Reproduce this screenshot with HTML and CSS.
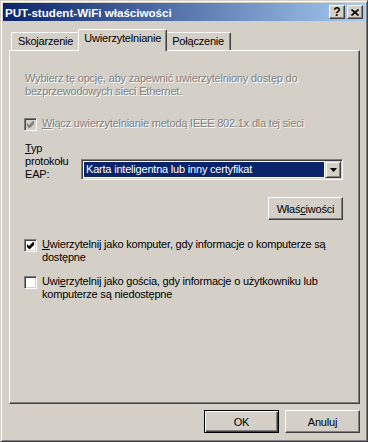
FILE: index.html
```html
<!DOCTYPE html>
<html lang="pl">
<head>
  <meta charset="UTF-8" />
  <title>PUT-student-WiFi właściwości</title>
  <link rel="stylesheet" href="styles.css">
</head>
<body>

  <div class="window">
    <div class="titlebar">
      <span class="title">PUT-student-WiFi właściwości</span>
      <div class="caption-buttons">
        <button class="cap-btn help">?</button>
        <button class="cap-btn">
          <svg width="8" height="7" viewBox="0 0 8 7"><path d="M0.5 0.5 L7.5 6.5 M7.5 0.5 L0.5 6.5" stroke="#000" stroke-width="1.6"/></svg>
        </button>
      </div>
    </div>

    <div class="dialog">
      <div class="tabs">
        <div class="tab first">Skojarzenie</div>
        <div class="tab active">Uwierzytelnianie</div>
        <div class="tab">Połączenie</div>
      </div>

      <div class="panel">
        <p class="hint disabled">Wybierz tę opcję, aby zapewnić uwierzytelniony dostęp do<br>bezprzewodowych sieci Ethernet.</p>

        <div class="check disabled">
          <span class="box off">
            <svg width="7" height="7" viewBox="0 0 7 7"><path d="M0 2 L2 4 L6 0 L7 0 L7 3 L3 7 L2 7 L0 5 Z" fill="#808080"/></svg>
          </span>
          <span class="check-text"><u>W</u>łącz uwierzytelnianie metodą IEEE 802.1x dla tej sieci</span>
        </div>

        <div class="eap-row">
          <div class="eap-label"><u>T</u>yp<br>protokołu<br>EAP:</div>
          <div class="combo">
            <div class="combo-value">Karta inteligentna lub inny certyfikat</div>
            <div class="combo-btn">
              <svg width="7" height="4" viewBox="0 0 7 4"><path d="M0 0 H7 L3.5 4 Z" fill="#000"/></svg>
            </div>
          </div>
        </div>

        <div class="props-row">
          <button class="btn">Właś<u>c</u>iwości</button>
        </div>

        <div class="check first-option">
          <span class="box">
            <svg width="7" height="7" viewBox="0 0 7 7"><path d="M0 2 L2 4 L6 0 L7 0 L7 3 L3 7 L2 7 L0 5 Z" fill="#000"/></svg>
          </span>
          <span class="check-text"><u>U</u>wierzytelnij jako komputer, gdy informacje o komputerze są<br>dostępne</span>
        </div>

        <div class="check second-option">
          <span class="box"></span>
          <span class="check-text">Uwi<u>e</u>rzytelnij jako gościa, gdy informacje o użytkowniku lub<br>komputerze są niedostępne</span>
        </div>
      </div>

      <div class="actions">
        <button class="btn default">OK</button>
        <button class="btn">Anuluj</button>
      </div>
    </div>
  </div>

</body>
</html>
```

FILE: styles.css
```css
* {
  box-sizing: border-box;
}

body {
  margin: 0;
  padding: 0;
  background: #d4d0c8;
  font-family: 'Liberation Sans', Arial, sans-serif;
  font-size: 11px;
  line-height: 13px;
  letter-spacing: -0.2px;
  color: #000;
}

u {
  text-decoration: underline;
  text-underline-offset: 1px;
}

.window {
  width: 368px;
  height: 442px;
  padding: 2px;
  background: #d4d0c8;
  border: 1px solid;
  border-color: #d4d0c8 #404040 #404040 #d4d0c8;
  box-shadow: inset 1px 1px #fff, inset -1px -1px #808080;
}

.titlebar {
  height: 18px;
  display: flex;
  align-items: center;
  justify-content: space-between;
  padding: 0 2px 0 2px;
  background: linear-gradient(to right, #0a246a, #a6caf0);
}

.title {
  color: #fff;
  font-weight: bold;
  font-size: 11.6px;
  letter-spacing: 0;
}

.caption-buttons {
  display: flex;
  gap: 2px;
}

.cap-btn {
  width: 16px;
  height: 14px;
  padding: 0;
  margin: 0;
  display: flex;
  align-items: center;
  justify-content: center;
  background: #d4d0c8;
  border: 1px solid;
  border-color: #fff #404040 #404040 #fff;
  box-shadow: inset -1px -1px #808080;
  font-family: 'Liberation Sans', Arial, sans-serif;
  font-weight: bold;
  font-size: 12px;
  line-height: 12px;
  color: #000;
}

.dialog {
  padding: 8px 5px 0 6px;
}

.tabs {
  height: 21px;
  display: flex;
  align-items: flex-end;
  padding-left: 2px;
}

.tab {
  height: 18px;
  padding: 2px 6px 0 6px;
  background: #d4d0c8;
  border-left: 1px solid #fff;
  border-top: 1px solid #fff;
  border-right: 1px solid #404040;
  border-radius: 2px 2px 0 0;
  box-shadow: inset -1px 0 #808080;
  white-space: nowrap;
}

.tab.active {
  position: relative;
  z-index: 1;
  height: 22px;
  margin: 0 -2px -1px -2px;
  padding: 2px 5px 0 5px;
}

.panel {
  height: 354px;
  padding: 21px 16px 0 15px;
  border: 1px solid;
  border-color: #fff #404040 #404040 #fff;
  box-shadow: inset -1px -1px #808080;
}

.disabled {
  color: #808080;
  text-shadow: 1px 1px 0 #fff;
}

.hint {
  margin: 0;
}

.check {
  display: flex;
  align-items: flex-start;
  gap: 5px;
  margin-left: -1px;
  margin-top: 19px;
}

.box {
  flex: none;
  width: 13px;
  height: 13px;
  margin-top: 1px;
  display: flex;
  align-items: center;
  justify-content: center;
  background: #fff;
  border: 1px solid;
  border-color: #808080 #fff #fff #808080;
  box-shadow: inset 1px 1px #404040, inset -1px -1px #d4d0c8;
}

.box.off {
  background: #d4d0c8;
}

.eap-row {
  display: flex;
  align-items: flex-start;
  margin-top: 11px;
}

.eap-label {
  width: 56px;
  flex: none;
}

.combo {
  flex: 1;
  height: 21px;
  margin-top: 17px;
  display: flex;
  background: #fff;
  border: 1px solid;
  border-color: #808080 #fff #fff #808080;
  box-shadow: inset 1px 1px #404040, inset -1px -1px #d4d0c8;
  padding: 1px;
}

.combo-value {
  flex: 1;
  margin: 1px 1px 1px 1px;
  padding-left: 2px;
  background: #0a246a;
  color: #fff;
  line-height: 15px;
  white-space: nowrap;
}

.combo-btn {
  width: 16px;
  height: 17px;
  display: flex;
  align-items: center;
  justify-content: center;
  background: #d4d0c8;
  border: 1px solid;
  border-color: #d4d0c8 #404040 #404040 #d4d0c8;
  box-shadow: inset 1px 1px #fff, inset -1px -1px #808080;
}

.props-row {
  display: flex;
  justify-content: flex-end;
  margin-top: 16px;
}

.btn {
  width: 75px;
  height: 23px;
  padding: 0;
  margin: 0;
  background: #d4d0c8;
  border: 1px solid;
  border-color: #fff #404040 #404040 #fff;
  box-shadow: inset -1px -1px #808080;
  font-family: 'Liberation Sans', Arial, sans-serif;
  font-size: 11px;
  letter-spacing: -0.2px;
  color: #000;
}

.btn.default {
  border-color: #000;
  box-shadow: inset 1px 1px #fff, inset -1px -1px #404040, inset -2px -2px #808080;
}

.first-option {
  margin-top: 18px;
}

.second-option {
  margin-top: 11px;
}

.actions {
  display: flex;
  justify-content: flex-end;
  gap: 6px;
  margin-top: 6px;
}
```
